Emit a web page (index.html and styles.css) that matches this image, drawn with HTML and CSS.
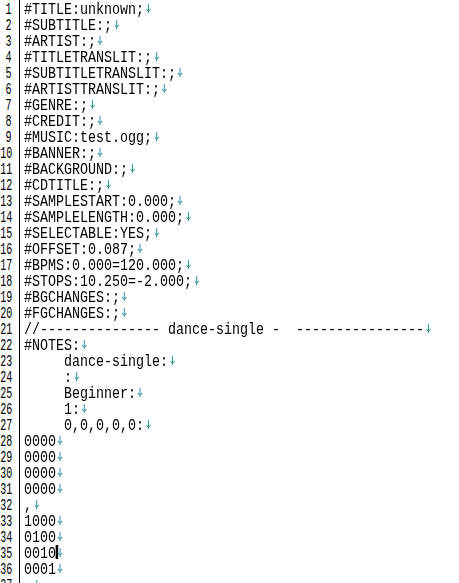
FILE: index.html
```html
<!DOCTYPE html>
<html lang="en">
<head>
<meta charset="utf-8">
<title>notes.sm</title>
<link rel="stylesheet" href="styles.css">
</head>
<body>
<svg class="defs" aria-hidden="true">
  <symbol id="nl" viewBox="0 0 8 16">
    <rect x="4" y="2" width="1" height="9"/>
    <rect x="2" y="7" width="1" height="1"/>
    <rect x="3" y="8" width="1" height="1"/>
    <rect x="5" y="8" width="1" height="1"/>
    <rect x="6" y="7" width="1" height="1"/>
  </symbol>
</svg>
<div class="editor">
  <div class="gutter">
    <div class="num"><span>1</span></div>
    <div class="num"><span>2</span></div>
    <div class="num"><span>3</span></div>
    <div class="num"><span>4</span></div>
    <div class="num"><span>5</span></div>
    <div class="num"><span>6</span></div>
    <div class="num"><span>7</span></div>
    <div class="num"><span>8</span></div>
    <div class="num"><span>9</span></div>
    <div class="num"><span>10</span></div>
    <div class="num"><span>11</span></div>
    <div class="num"><span>12</span></div>
    <div class="num"><span>13</span></div>
    <div class="num"><span>14</span></div>
    <div class="num"><span>15</span></div>
    <div class="num"><span>16</span></div>
    <div class="num"><span>17</span></div>
    <div class="num"><span>18</span></div>
    <div class="num"><span>19</span></div>
    <div class="num"><span>20</span></div>
    <div class="num"><span>21</span></div>
    <div class="num"><span>22</span></div>
    <div class="num"><span>23</span></div>
    <div class="num"><span>24</span></div>
    <div class="num"><span>25</span></div>
    <div class="num"><span>26</span></div>
    <div class="num"><span>27</span></div>
    <div class="num"><span>28</span></div>
    <div class="num"><span>29</span></div>
    <div class="num"><span>30</span></div>
    <div class="num"><span>31</span></div>
    <div class="num"><span>32</span></div>
    <div class="num"><span>33</span></div>
    <div class="num"><span>34</span></div>
    <div class="num"><span>35</span></div>
    <div class="num"><span>36</span></div>
    <div class="num"><span>37</span></div>
  </div>
  <div class="code">
    <div class="text">
      <div class="line">#TITLE:unknown;<svg class="nl" preserveAspectRatio="none"><use href="#nl"/></svg></div>
      <div class="line">#SUBTITLE:;<svg class="nl" preserveAspectRatio="none"><use href="#nl"/></svg></div>
      <div class="line">#ARTIST:;<svg class="nl" preserveAspectRatio="none"><use href="#nl"/></svg></div>
      <div class="line">#TITLETRANSLIT:;<svg class="nl" preserveAspectRatio="none"><use href="#nl"/></svg></div>
      <div class="line">#SUBTITLETRANSLIT:;<svg class="nl" preserveAspectRatio="none"><use href="#nl"/></svg></div>
      <div class="line">#ARTISTTRANSLIT:;<svg class="nl" preserveAspectRatio="none"><use href="#nl"/></svg></div>
      <div class="line">#GENRE:;<svg class="nl" preserveAspectRatio="none"><use href="#nl"/></svg></div>
      <div class="line">#CREDIT:;<svg class="nl" preserveAspectRatio="none"><use href="#nl"/></svg></div>
      <div class="line">#MUSIC:test.ogg;<svg class="nl" preserveAspectRatio="none"><use href="#nl"/></svg></div>
      <div class="line">#BANNER:;<svg class="nl" preserveAspectRatio="none"><use href="#nl"/></svg></div>
      <div class="line">#BACKGROUND:;<svg class="nl" preserveAspectRatio="none"><use href="#nl"/></svg></div>
      <div class="line">#CDTITLE:;<svg class="nl" preserveAspectRatio="none"><use href="#nl"/></svg></div>
      <div class="line">#SAMPLESTART:0.000;<svg class="nl" preserveAspectRatio="none"><use href="#nl"/></svg></div>
      <div class="line">#SAMPLELENGTH:0.000;<svg class="nl" preserveAspectRatio="none"><use href="#nl"/></svg></div>
      <div class="line">#SELECTABLE:YES;<svg class="nl" preserveAspectRatio="none"><use href="#nl"/></svg></div>
      <div class="line">#OFFSET:0.087;<svg class="nl" preserveAspectRatio="none"><use href="#nl"/></svg></div>
      <div class="line">#BPMS:0.000=120.000;<svg class="nl" preserveAspectRatio="none"><use href="#nl"/></svg></div>
      <div class="line">#STOPS:10.250=-2.000;<svg class="nl" preserveAspectRatio="none"><use href="#nl"/></svg></div>
      <div class="line">#BGCHANGES:;<svg class="nl" preserveAspectRatio="none"><use href="#nl"/></svg></div>
      <div class="line">#FGCHANGES:;<svg class="nl" preserveAspectRatio="none"><use href="#nl"/></svg></div>
      <div class="line">//--------------- dance-single -  ----------------<svg class="nl" preserveAspectRatio="none"><use href="#nl"/></svg></div>
      <div class="line">#NOTES:<svg class="nl" preserveAspectRatio="none"><use href="#nl"/></svg></div>
      <div class="line">	dance-single:<svg class="nl" preserveAspectRatio="none"><use href="#nl"/></svg></div>
      <div class="line">	:<svg class="nl" preserveAspectRatio="none"><use href="#nl"/></svg></div>
      <div class="line">	Beginner:<svg class="nl" preserveAspectRatio="none"><use href="#nl"/></svg></div>
      <div class="line">	1:<svg class="nl" preserveAspectRatio="none"><use href="#nl"/></svg></div>
      <div class="line">	0,0,0,0,0:<svg class="nl" preserveAspectRatio="none"><use href="#nl"/></svg></div>
      <div class="line">0000<svg class="nl" preserveAspectRatio="none"><use href="#nl"/></svg></div>
      <div class="line">0000<svg class="nl" preserveAspectRatio="none"><use href="#nl"/></svg></div>
      <div class="line">0000<svg class="nl" preserveAspectRatio="none"><use href="#nl"/></svg></div>
      <div class="line">0000<svg class="nl" preserveAspectRatio="none"><use href="#nl"/></svg></div>
      <div class="line">,<svg class="nl" preserveAspectRatio="none"><use href="#nl"/></svg></div>
      <div class="line">1000<svg class="nl" preserveAspectRatio="none"><use href="#nl"/></svg></div>
      <div class="line">0100<svg class="nl" preserveAspectRatio="none"><use href="#nl"/></svg></div>
      <div class="line">0010<span class="caret"></span><svg class="nl" preserveAspectRatio="none"><use href="#nl"/></svg></div>
      <div class="line">0001<svg class="nl" preserveAspectRatio="none"><use href="#nl"/></svg></div>
      <div class="line">,<svg class="nl" preserveAspectRatio="none"><use href="#nl"/></svg></div>
    </div>
  </div>
</div>
</body>
</html>
```
FILE: styles.css
```css
html, body {
  margin: 0;
  padding: 0;
  height: 100%;
  overflow: hidden;
  background: #fff;
}

body {
  font-family: "Liberation Mono", "DejaVu Sans Mono", monospace;
  font-size: 16px;
  color: #000;
}

.defs {
  display: none;
}

.editor {
  display: flex;
  min-height: 100%;
}

.gutter {
  width: 12px;
  padding-right: 7px;
  border-right: 1px solid #000;
  flex: none;
}

.num {
  display: flex;
  justify-content: flex-end;
  box-sizing: border-box;
  height: 16px;
  padding-top: 2px;
  line-height: 16px;
  white-space: nowrap;
}

.num span {
  transform: scaleX(0.625);
  transform-origin: right top;
}

.code {
  flex: 1;
  padding-left: 4px;
  min-width: 0;
}

.text {
  transform: scaleX(0.8333333);
  transform-origin: 0 0;
}

.line {
  box-sizing: border-box;
  height: 16px;
  padding-top: 2px;
  line-height: 16px;
  white-space: pre;
  tab-size: 5;
}

.nl {
  display: inline-block;
  width: 1ch;
  height: 16px;
  vertical-align: top;
  fill: #008080;
}

.caret {
  display: inline-block;
  width: 2.4px;
  height: 14px;
  margin-top: -1px;
  margin-right: -2.4px;
  vertical-align: top;
  background: #000;
}
```
